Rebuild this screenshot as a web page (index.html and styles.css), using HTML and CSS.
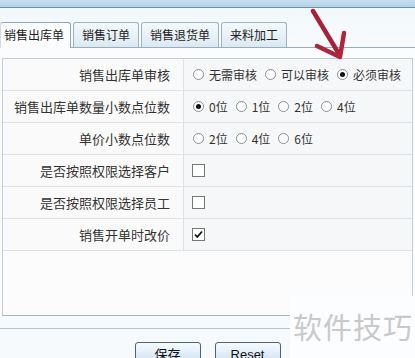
FILE: index.html
```html
<!DOCTYPE html>
<html lang="zh-CN">
<head>
    <meta charset="UTF-8">
    <meta name="viewport" content="width=device-width, initial-scale=1.0">
    <title>销售参数设置</title>
    <link rel="stylesheet" href="styles.css">
</head>
<body>
    <div class="window">
        <div class="titlebar"></div>

        <div class="tabs">
            <div class="tab active">销售出库单</div>
            <div class="tab">销售订单</div>
            <div class="tab">销售退货单</div>
            <div class="tab">来料加工</div>
        </div>

        <div class="tab-body">
            <div class="settings">
                <div class="row">
                    <div class="label">销售出库单审核</div>
                    <div class="field">
                        <span class="opt"><span class="radio"></span>无需审核</span>
                        <span class="opt"><span class="radio"></span>可以审核</span>
                        <span class="opt"><span class="radio checked"></span>必须审核</span>
                    </div>
                </div>
                <div class="row">
                    <div class="label">销售出库单数量小数点位数</div>
                    <div class="field">
                        <span class="opt"><span class="radio checked"></span>0位</span>
                        <span class="opt"><span class="radio"></span>1位</span>
                        <span class="opt"><span class="radio"></span>2位</span>
                        <span class="opt"><span class="radio"></span>4位</span>
                    </div>
                </div>
                <div class="row">
                    <div class="label">单价小数点位数</div>
                    <div class="field">
                        <span class="opt"><span class="radio"></span>2位</span>
                        <span class="opt"><span class="radio"></span>4位</span>
                        <span class="opt"><span class="radio"></span>6位</span>
                    </div>
                </div>
                <div class="row">
                    <div class="label">是否按照权限选择客户</div>
                    <div class="field"><span class="check"></span></div>
                </div>
                <div class="row">
                    <div class="label">是否按照权限选择员工</div>
                    <div class="field"><span class="check"></span></div>
                </div>
                <div class="row">
                    <div class="label">销售开单时改价</div>
                    <div class="field">
                        <span class="check">
                            <svg width="11" height="11" viewBox="0 0 11 11"><path d="M2 5.5 L4.3 8 L9 2.5" fill="none" stroke="#111" stroke-width="1.8"/></svg>
                        </span>
                    </div>
                </div>
            </div>
        </div>

        <div class="actions">
            <button class="btn">保存</button>
            <button class="btn">Reset</button>
        </div>
    </div>

    <!-- red arrow drawn over the screenshot -->
    <svg class="arrow" width="60" height="60" viewBox="300 5 60 60">
        <path d="M313 11 L339 54" fill="none" stroke="#a52338" stroke-width="4.5" stroke-linecap="round"/>
        <path d="M317 46 L340 57 L344 33" fill="none" stroke="#b0253a" stroke-width="4.5" stroke-linecap="round" stroke-linejoin="round"/>
    </svg>

    <div class="watermark">软件技巧</div>
</body>
</html>
```

FILE: styles.css
```css
* {
    margin: 0;
    padding: 0;
    box-sizing: border-box;
}

body {
    width: 415px;
    height: 358px;
    overflow: hidden;
    position: relative;
    background-color: #f6fafc;
    font-family: "Noto Sans CJK SC", "Liberation Sans", sans-serif;
    color: #333;
}

.titlebar {
    height: 8px;
    background: linear-gradient(#c7def0, #b3d1e6);
    border-bottom: 1px solid #6f93aa;
}

.tabs {
    display: flex;
    gap: 2px;
    padding-top: 14px;
    height: 40px;
    border-bottom: 1px solid #93aebf;
    background: linear-gradient(#f2f8fb, #f8fbfd);
}

.tab {
    height: 25px;
    line-height: 24px;
    padding: 0 8px;
    font-size: 12px;
    color: #222;
    border: 1px solid #9cb3c1;
    border-bottom: none;
    border-radius: 3px 3px 0 0;
    background: linear-gradient(#f4f9fc, #dce9f1);
}

.tab.active {
    padding: 0 6px 0 3px;
    height: 26px;
    margin-bottom: -1px;
    background: #fbfdfe;
    border-color: #8fa8b8;
    border-left-color: #cfdbe2;
}

.tab-body {
    padding: 10px 2px 0 2px;
    background: #fbfcfd;
}

.settings {
    height: 258px;
    border: 1px solid #c3cdd4;
    border-bottom-color: #a9b4bb;
    background: #fcfcfc;
}

.row {
    display: grid;
    grid-template-columns: 181px 1fr;
    height: 32px;
    border-bottom: 1px solid #dde2e6;
}

.label {
    display: flex;
    align-items: center;
    justify-content: flex-end;
    padding-right: 13px;
    font-size: 13px;
    background: #fafafa;
    border-right: 1px solid #dde2e6;
}

.field {
    display: flex;
    align-items: center;
    gap: 8px;
    padding-left: 9px;
    font-size: 12px;
    background: #f6f7f8;
}

.opt {
    display: flex;
    align-items: center;
    gap: 5px;
}

.radio {
    width: 11px;
    height: 11px;
    border: 1px solid #8a8f94;
    border-radius: 50%;
    background: #fff;
    display: flex;
    align-items: center;
    justify-content: center;
}

.radio.checked::after {
    content: "";
    width: 5px;
    height: 5px;
    border-radius: 50%;
    background: #111;
}

.check {
    width: 13px;
    height: 13px;
    margin-left: -1px;
    border: 1px solid #777;
    background: #fff;
    display: flex;
    align-items: center;
    justify-content: center;
}

.actions {
    margin-top: 12px;
    border-top: 1px solid #b9c3c9;
    padding-top: 13px;
    display: flex;
    justify-content: center;
    gap: 14px;
}

.btn {
    width: 66px;
    height: 24px;
    border: 1px solid #4e6577;
    border-radius: 3px;
    background: linear-gradient(#f7fbfe, #c9def0);
    font-family: "Liberation Sans", "Noto Sans CJK SC", sans-serif;
    font-size: 13px;
    line-height: 16px;
    padding-top: 1px;
    color: #111;
}

.arrow {
    position: absolute;
    left: 300px;
    top: 5px;
}

.watermark {
    position: absolute;
    left: 290px;
    top: 296px;
    width: 125px;
    height: 62px;
    padding-top: 16px;
    padding-left: 3px;
    background: #fcfdfe;
    color: #c9c9c9;
    font-size: 29px;
    letter-spacing: 1px;
    line-height: 1;
}
```
